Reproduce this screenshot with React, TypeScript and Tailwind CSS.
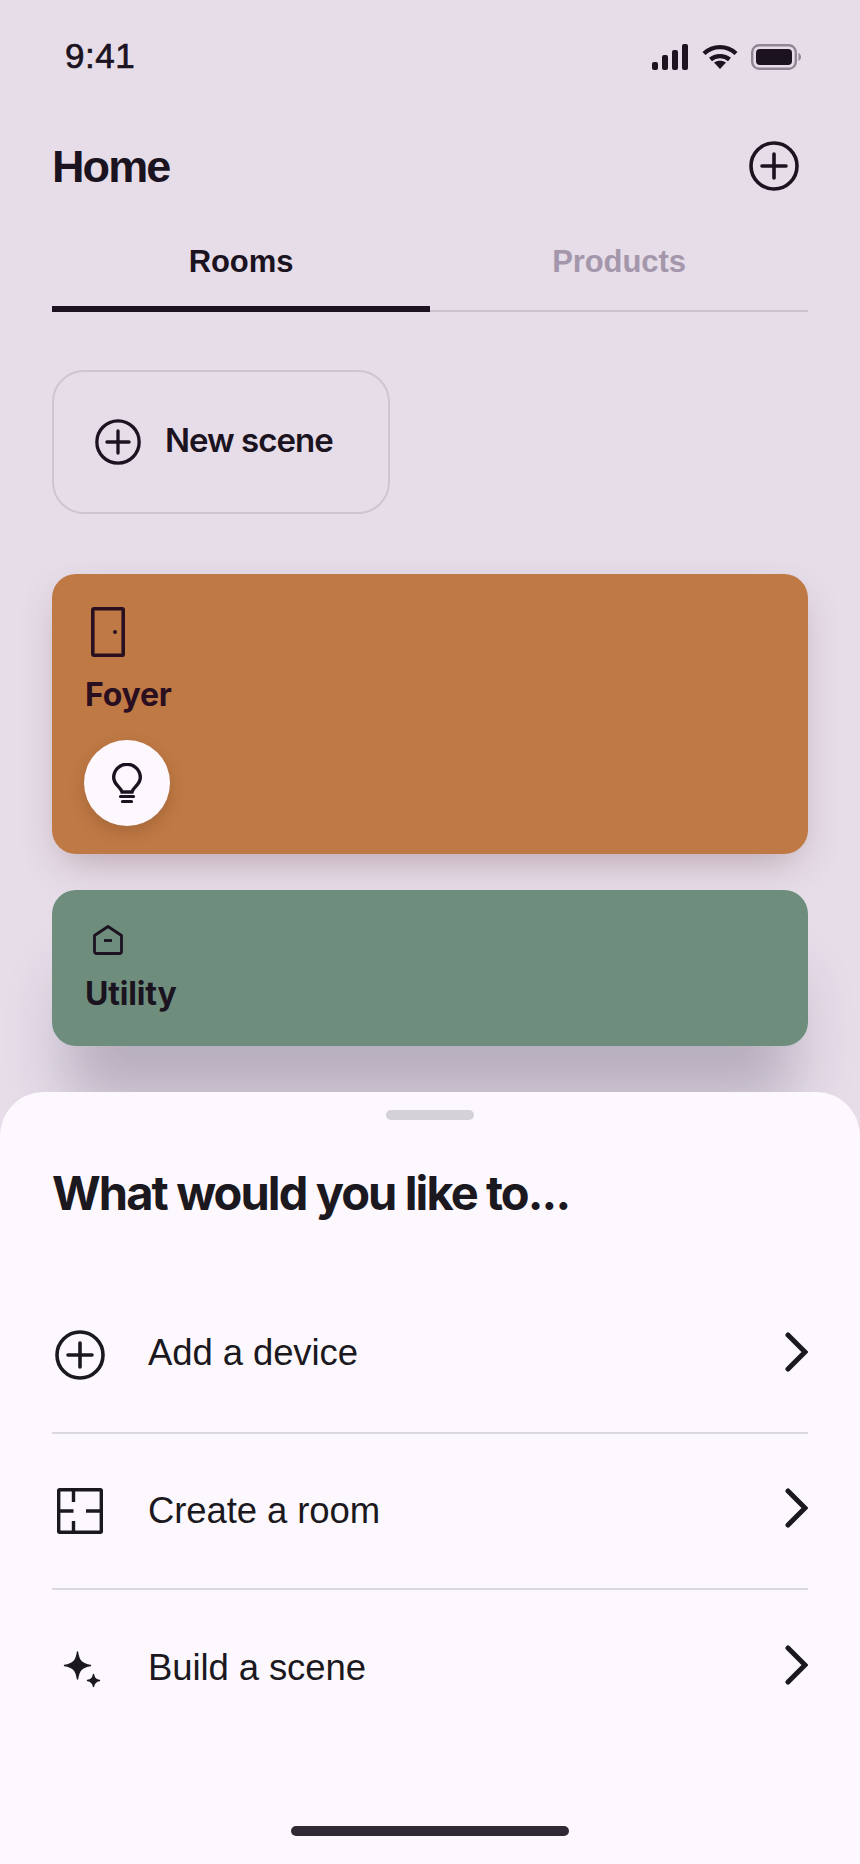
import { ReactNode } from 'react';

const INK = '#1b1320';

function PlusCircle({ className = '' }: { className?: string }) {
  return (
    <svg viewBox="0 0 50 50" fill="none" stroke="currentColor" strokeWidth="3.6" strokeLinecap="round" className={className}>
      <circle cx="25" cy="25" r="23" />
      <path d="M25 13v24M13 25h24" />
    </svg>
  );
}

function Chevron() {
  return (
    <svg viewBox="0 0 24 40" fill="none" stroke="currentColor" strokeWidth="5" strokeLinecap="round" strokeLinejoin="miter" className="mb-[6px] h-10 w-6 text-[#1b1820]">
      <path d="M4 3l17 17L4 37" />
    </svg>
  );
}

function FloorPlan() {
  return (
    <svg viewBox="0 0 48 48" fill="none" stroke="currentColor" strokeWidth="3.4" className="h-12 w-12">
      <rect x="2.700" y="2.700" width="42.600" height="42.600" rx="1" />
      <path d="M17.500 2.700V15M17.500 34v11.300M2.700 24h14.800M30 24h15.300" />
    </svg>
  );
}

function Sparkles() {
  return (
    <svg viewBox="0 0 48 48" fill="currentColor" stroke="currentColor" strokeWidth="1.400" strokeLinejoin="round" className="h-12 w-12">
      <path d="M23.500 8c1.300 8.800 4.200 12.200 13 13.500-8.800 1.300-11.700 4.700-13 13.500-1.300-8.800-4.200-12.200-13-13.500 8.800-1.300 11.700-4.700 13-13.500z" />
      <path d="M39.500 30.500c.6 3.700 2.300 5.400 6 6-3.700.6-5.400 2.300-6 6-.6-3.700-2.300-5.400-6-6 3.700-.6 5.400-2.300 6-6z" />
    </svg>
  );
}

function SheetRow({ icon, label, divider, raised }: { icon: ReactNode; label: string; divider?: boolean; raised?: boolean }) {
  return (
    <div className={`flex h-[156px] items-center ${divider ? 'border-b-2 border-[#dcd8df]' : ''}`}>
      <div className="flex w-[96px] shrink-0 items-center">{icon}</div>
      <span className={`flex-1 font-['Liberation_Sans',sans-serif] text-[36.500px] tracking-[-0.1px] text-[#1b1820] ${raised ? 'pb-[3px]' : ''}`}>{label}</span>
      <Chevron />
    </div>
  );
}

export default function App() {
  return (
    <div className="relative h-[1864px] w-[860px] overflow-hidden bg-[#e6dde9] font-['Inter',sans-serif]" style={{ color: INK }}>
      {/* Status bar */}
      <div className="flex h-[113px] items-center justify-between pl-[65px] pr-[59px]">
        <span className="font-['Liberation_Sans',sans-serif] text-[35px] tracking-[0.5px] [-webkit-text-stroke:0.7px_#1b1320]">9:41</span>
        <div className="flex items-center gap-[13.500px]">
          <svg viewBox="0 0 36 26" fill="currentColor" className="h-[26px] w-[36px]">
            <rect x="0" y="18" width="6" height="8" rx="2" />
            <rect x="10" y="11" width="6" height="15" rx="2" />
            <rect x="20" y="6" width="6" height="20" rx="2" />
            <rect x="30" y="0" width="6" height="26" rx="2" />
          </svg>
          <svg viewBox="0 0 36 26" fill="none" stroke="currentColor" strokeWidth="4.400" className="h-[26px] w-[36px]">
            <path d="M2 9.500C11 1 25 1 34 9.500" />
            <path d="M8.500 15.500C13.500 11 22.500 11 27.500 15.500" />
            <path d="M18 25l-6-6.500c3.500-2.500 8.500-2.500 12 0z" fill="currentColor" stroke="none" />
          </svg>
          <svg viewBox="0 0 50 26" fill="none" className="h-[26px] w-[50px]">
            <rect x="1.200" y="1.200" width="43.600" height="23.600" rx="7" stroke="#8f8795" strokeWidth="2.400" />
            <rect x="5" y="5" width="36" height="16" rx="4" fill="currentColor" />
            <path d="M47.500 9c1.500.6 2.500 2.200 2.500 4s-1 3.400-2.500 4z" fill="#8f8795" />
          </svg>
        </div>
      </div>

      {/* Header */}
      <div className="flex h-[106px] items-center justify-between pl-[52px] pr-[61px]">
        <h1 className="pt-[2px] font-['Liberation_Sans',sans-serif] text-[45px] font-bold tracking-[-1.9px]">Home</h1>
        <PlusCircle className="h-[50px] w-[50px]" />
      </div>

      {/* Tabs */}
      <div className="mx-[52px] flex h-[93px] border-b-2 border-[#c9c1cd]">
        <div className="relative flex flex-1 items-center justify-center pb-[5px] font-['Liberation_Sans',sans-serif] text-[31px] font-bold tracking-[-0.1px]">
          Rooms
          <div className="absolute inset-x-0 bottom-[-2px] h-[6px] bg-[#1b1320]" />
        </div>
        <div className="flex flex-1 items-center justify-center pb-[5px] font-['Liberation_Sans',sans-serif] text-[31px] font-bold tracking-[-0.1px] text-[#a497ab]">
          Products
        </div>
      </div>

      {/* New scene */}
      <div className="ml-[52px] mt-[58px] flex h-[144px] w-[338px] items-center gap-[24px] rounded-[32px] border-2 border-[#cdc6d1] pl-[41px]">
        <PlusCircle className="h-[46px] w-[46px]" />
        <span className="pb-[3px] text-[33px] font-semibold tracking-[-1px]">New scene</span>
      </div>

      {/* Rooms */}
      <div className="mx-[52px] mt-[60px] flex flex-col gap-[36px]">
        <div className="h-[280px] rounded-[24px] bg-[#bf7945] pl-[33px] pt-[33px] shadow-[0_16px_40px_-12px_rgba(120,80,80,0.45)]">
          <svg viewBox="0 0 34 50" fill="none" stroke="#2a0f20" strokeWidth="3.600" className="ml-[6px] h-[50px] w-[34px]">
            <rect x="1.800" y="1.800" width="30.400" height="46.400" rx="1" />
            <circle cx="24" cy="25" r="2" fill="#2a0f20" stroke="none" />
          </svg>
          <div className="mt-[18px] text-[32px] font-bold leading-[40px] tracking-[-0.2px] text-[#2a0f20]">Foyer</div>
          <div className="mt-[25px] -ml-px flex h-[86px] w-[86px] items-center justify-center rounded-full bg-[#fdf8fe] shadow-[0_6px_16px_rgba(90,50,20,0.25)]">
            <svg viewBox="0 0 30 40" fill="none" stroke={INK} strokeWidth="3.400" strokeLinecap="round" className="h-[40px] w-[30px]">
              <path d="M10 29C9 24 1.700 22 1.700 14.500a13.300 13.300 0 0 1 26.600 0C28.300 22 21 24 20 29z" />
              <path d="M8.500 33.500h13M10.500 38.500h9" strokeWidth="3.200" />
            </svg>
          </div>
        </div>
        <div className="h-[156px] rounded-[24px] bg-[#6e8d7d] pl-[33px] pt-[35px] shadow-[0_70px_60px_-16px_rgba(60,50,80,0.28)]">
          <svg viewBox="0 0 30 30" fill="none" stroke={INK} strokeWidth="2.800" strokeLinejoin="round" className="ml-[8px] h-[30px] w-[30px]">
            <path d="M1.500 10.500L15 1.500l13.500 9v16a2 2 0 0 1-2 2h-23a2 2 0 0 1-2-2z" />
            <path d="M11 15.500h8" />
          </svg>
          <div className="mt-[19px] text-[32px] font-bold leading-[40px] tracking-[-0.2px]">Utility</div>
        </div>
      </div>

      {/* Bottom sheet */}
      <div className="absolute inset-x-0 bottom-0 h-[772px] rounded-t-[44px] bg-[#fdf8fe] px-[52px] text-[#1b1820]">
        <div className="mx-auto mt-[18px] h-[10px] w-[88px] rounded-full bg-[#d5d1d8]" />
        <h2 className="mt-[45px] text-[47px] font-bold leading-[56px] tracking-[-1.900px]">What would you like to...</h2>
        <div className="mt-[57px]">
          <SheetRow icon={<PlusCircle className="ml-[3px] h-[50px] w-[50px]" />} label="Add a device" divider raised />
          <SheetRow icon={<div className="ml-[4px]"><FloorPlan /></div>} label="Create a room" divider />
          <SheetRow icon={<div className="ml-[2px]"><Sparkles /></div>} label="Build a scene" />
        </div>
        <div className="absolute bottom-[28px] left-1/2 h-[10px] w-[278px] -translate-x-1/2 rounded-full bg-[#2f2a33]" />
      </div>
    </div>
  );
}
